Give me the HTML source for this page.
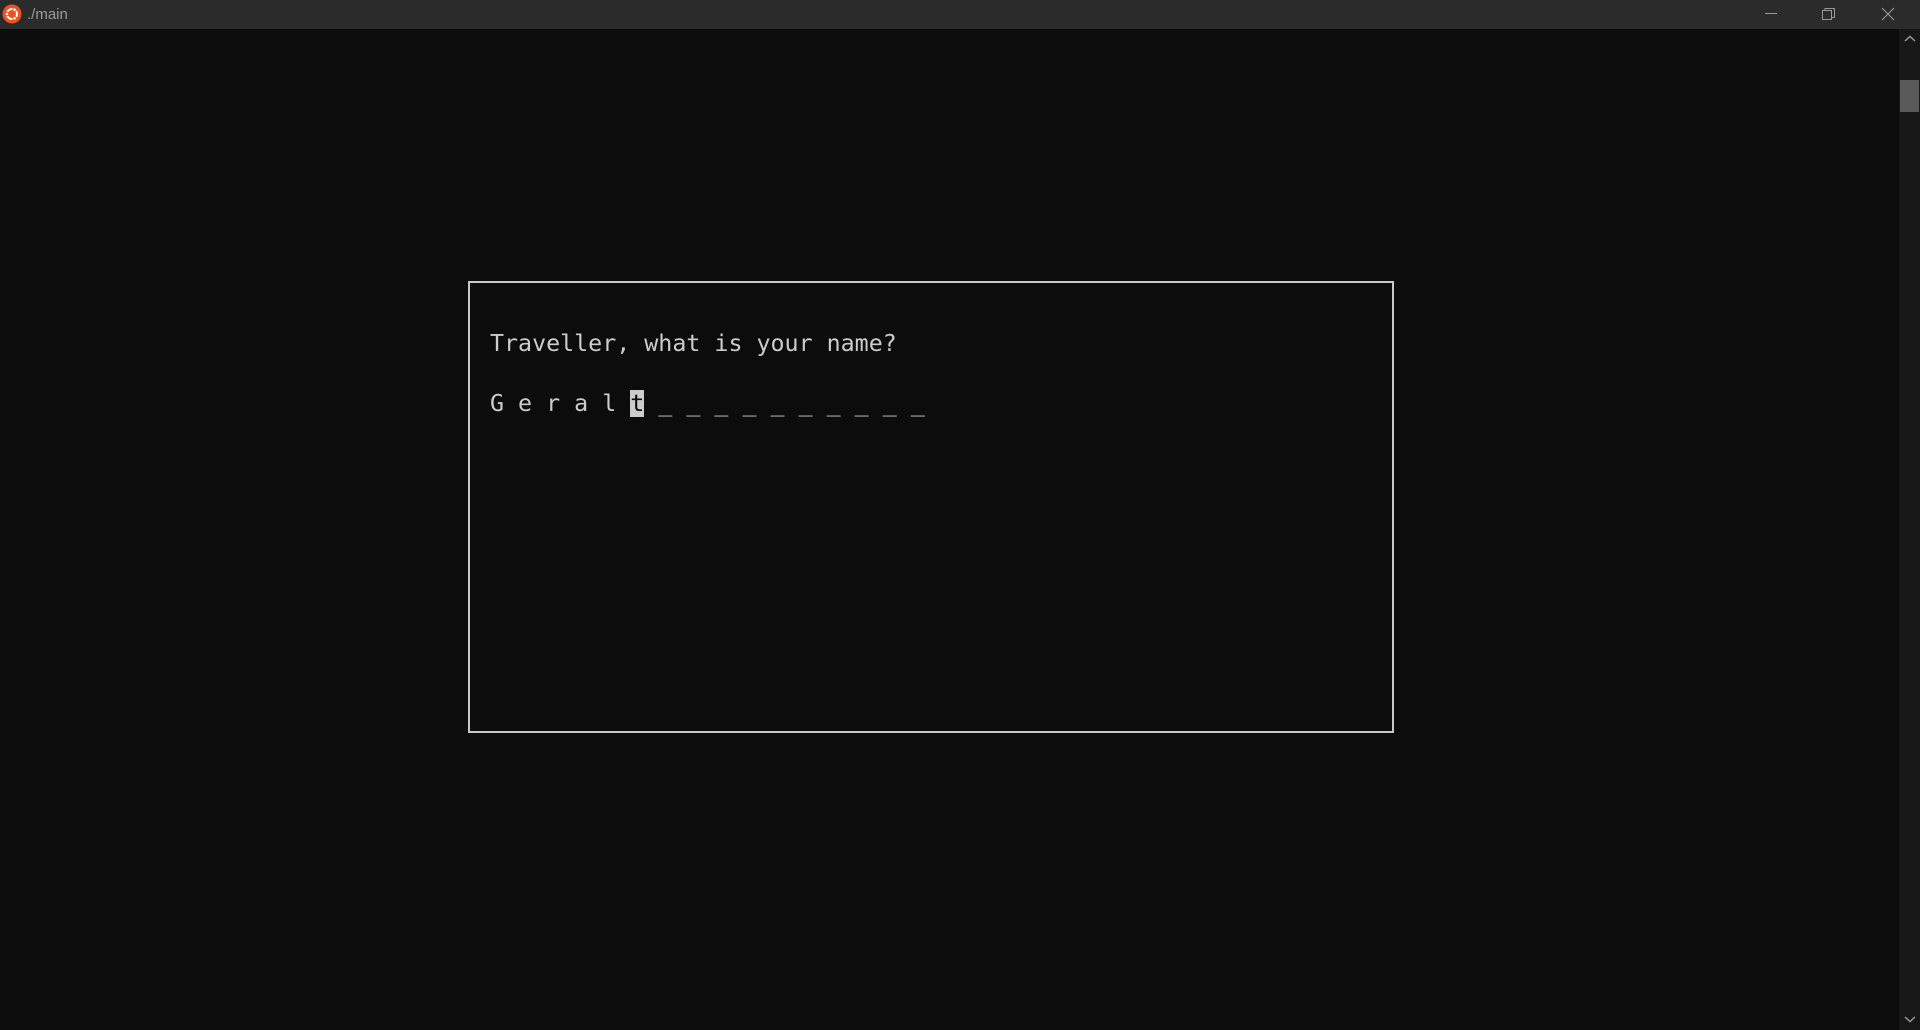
<!DOCTYPE html>
<html><head><meta charset="utf-8"><style>
html,body{margin:0;padding:0;width:1920px;height:1030px;background:#0c0c0c;overflow:hidden;position:relative}
.tb{position:absolute;left:0;top:0;width:1920px;height:29px;background:#2b2b2b}
.title{position:absolute;left:27px;top:6px;font:15px "Liberation Sans",sans-serif;color:#9a9a9a}
.sb{position:absolute;left:1899px;top:29px;width:21px;height:1001px;background:#171717}
.thumb{position:absolute;left:1900px;top:80px;width:19px;height:32px;background:#5a5a5a}
.box{position:absolute;left:468px;top:281px;width:922px;height:448px;border:2px solid #c8c8c8}
.t{position:absolute;font:23.3px "DejaVu Sans Mono","Liberation Mono",monospace;color:#cccccc;white-space:pre;line-height:30px}
.cur{background:#cccccc;color:#0c0c0c}
</style></head><body>
<div class="tb">
<svg style="position:absolute;left:2px;top:4px" width="20" height="20" viewBox="0 0 20 20"><circle cx="10" cy="10" r="9.5" fill="#e95420"/><circle cx="10" cy="10" r="5" fill="none" stroke="#fff" stroke-width="2"/><circle cx="5" cy="10" r="1.8" fill="#fff" stroke="#e95420" stroke-width="1"/><circle cx="12.5" cy="5.7" r="1.8" fill="#fff" stroke="#e95420" stroke-width="1"/><circle cx="12.5" cy="14.3" r="1.8" fill="#fff" stroke="#e95420" stroke-width="1"/></svg>
<div class="title">./main</div>
<svg style="position:absolute;left:1765px;top:7px" width="14" height="14"><line x1="0" y1="6.5" x2="12" y2="6.5" stroke="#999" stroke-width="1"/></svg>
<svg style="position:absolute;left:1822px;top:7px" width="14" height="14"><rect x="0.5" y="3.5" width="9" height="9" fill="none" stroke="#999"/><path d="M3 3.5V1.5H12.5V10.5H10" fill="none" stroke="#999"/></svg>
<svg style="position:absolute;left:1881px;top:7px" width="14" height="14"><path d="M1 1L13 13M13 1L1 13" stroke="#999" stroke-width="1.1"/></svg>
</div>
<div class="sb"></div>
<svg style="position:absolute;left:1904px;top:35px" width="12" height="8"><path d="M1 6L6 1.5L11 6" fill="none" stroke="#999" stroke-width="1.5"/></svg>
<div class="thumb"></div>
<svg style="position:absolute;left:1904px;top:1015px" width="12" height="8"><path d="M1 2L6 6.5L11 2" fill="none" stroke="#999" stroke-width="1.5"/></svg>
<div class="box"></div>
<div class="t" style="left:490px;top:329px">Traveller, what is your name?</div>
<div class="t" style="left:490px;top:389px">G e r a l <span class="cur">t</span> _ _ _ _ _ _ _ _ _ _</div>
</body></html>
